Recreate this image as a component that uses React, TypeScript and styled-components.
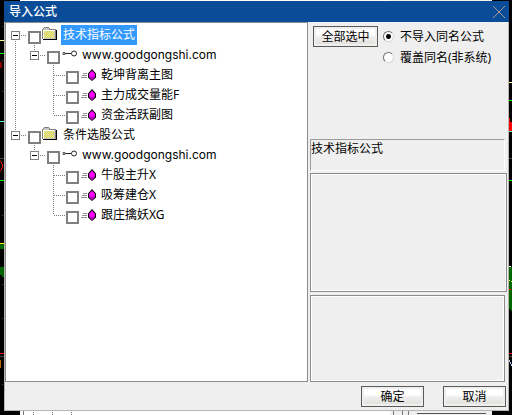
import React, { useState } from "react";
import styled, { createGlobalStyle } from "styled-components";

const Global = createGlobalStyle`
  * { box-sizing: border-box; }
  html, body, #root { height: 100%; }
  body {
    margin: 0;
    overflow: hidden;
    background: #000;
    color: #000;
    font: 12px/20px "Noto Sans", "Noto Sans CJK SC", sans-serif;
  }
`;

const Desktop = styled.div`
  position: relative;
  height: 100%;
  padding: 1px 3px 4px 4px;
`;

const Backdrop = styled.svg`
  position: absolute;
  top: 0;
`;
const LeftBackdrop = styled(Backdrop)`left: 0;`;
const RightBackdrop = styled(Backdrop)`right: 0;`;

const Behind = styled.div<{ $edge: "top" | "bottom" }>`
  position: absolute;
  left: 20px;
  right: 20px;
  height: 4px;
  ${(p) => p.$edge}: 0;
  background: linear-gradient(90deg, #fff 0 370px, #efefef 370px);
`;

const BehindArt = styled.svg`
  display: block;
`;

const Dialog = styled.main`
  position: relative;
  height: 100%;
  display: flex;
  flex-direction: column;
  background: #efefef;
  border: 1px solid #bab4ab;
  border-top: 0;
`;

const TitleBar = styled.header`
  flex: none;
  height: 21px;
  margin: 0 -1px;
  padding: 0 0 0 5px;
  display: flex;
  align-items: center;
  justify-content: space-between;
  background: #0b4c98;
  color: #fff;
`;

const Title = styled.h1`
  margin: 0;
  font-size: 12px;
  line-height: 20px;
  font-weight: 500;
`;

const CloseButton = styled.button`
  width: 20px;
  height: 20px;
  padding: 4px;
  border: 0;
  background: none;
`;

const Body = styled.div`
  flex: 1;
  min-height: 0;
  display: grid;
  grid-template-columns: 303fr 200fr;
`;

const Tree = styled.ul`
  margin: 0;
  padding: 2px 0 0 3px;
  list-style: none;
  background: #fff;
  border: 1px solid #8b8b8b;
`;

const Row = styled.li`
  height: 20px;
  display: flex;
  align-items: flex-start;
`;

const Glyph = styled.svg`
  flex: none;
  display: block;
`;

const Check = styled.input`
  appearance: none;
  flex: none;
  width: 13px;
  height: 13px;
  margin: 6px 0 0;
  border: 2px solid #808080;
  background: #fff;
  &:checked { background: #808080; background-clip: content-box; padding: 1px; }
`;

const RowLabel = styled.label`
  display: flex;
  white-space: nowrap;
`;

const RowText = styled.span<{ $selected?: boolean; $url?: boolean }>`
  height: 20px;
  padding: 0 2px;
  line-height: 20px;
  font-family: ${(p) => (p.$url ? 'Inter, "Noto Sans", sans-serif' : "inherit")};
  background: ${(p) => (p.$selected ? "#3399ff" : "transparent")};
  color: ${(p) => (p.$selected ? "#fff" : "#000")};
`;

const Side = styled.section`
  min-width: 0;
  display: flex;
  flex-direction: column;
  padding: 4px 1px 0 2px;
`;

const Options = styled.div`
  flex: none;
  height: 113px;
  display: flex;
  align-items: flex-start;
  gap: 5px;
  padding-left: 3px;
`;

const PushButton = styled.button`
  flex: none;
  width: 63px;
  height: 21px;
  padding: 0;
  border: 1px solid #5a5a5a;
  box-shadow: inset 0 0 0 2px #efefef;
  background: linear-gradient(#fff 0 40%, #eeedeb 55%, #e1dfdb);
  color: #000;
  font: inherit;
  line-height: 18px;
`;
const SelectAll = styled(PushButton)`width: 65px;`;

const Radios = styled.div`
  display: flex;
  flex-direction: column;
  white-space: nowrap;
`;

const RadioLabel = styled.label`
  height: 21px;
  display: flex;
  align-items: center;
  gap: 6px;
`;

const Radio = styled.input`
  appearance: none;
  width: 11px;
  height: 11px;
  margin: 0;
  border-radius: 50%;
  border: 1px solid;
  border-color: #707070 #d8d8d8 #d8d8d8 #707070;
  background: #fff;
  &:checked { background: radial-gradient(circle, #000 0 2px, #fff 3px); }
`;

const Caption = styled.div`
  flex: none;
  height: 32px;
  margin-right: 2px;
  border: 1px solid;
  border-color: #9c9c9c #fff #fff #9c9c9c;
  line-height: 18px;
`;

const Panel = styled.div<{ $wide?: boolean }>`
  flex: ${(p) => (p.$wide ? 119 : 87)} 0 0;
  margin: ${(p) => (p.$wide ? "2px 0 3px" : "0 2px 0 0")};
  border: 1px solid #8b8b8b;
  box-shadow: inset 0 0 0 1px #fff;
`;

const Footer = styled.footer`
  flex: none;
  height: 28px;
  display: flex;
  justify-content: flex-end;
  gap: 19px;
  padding: 4px 2px 0;
`;

const ditherRows = [6, 7, 8, 9, 10, 11, 12];

function Folder() {
  return (
    <Glyph width="20" height="20" shapeRendering="crispEdges">
      <path d="M1 14V4h1V3h1V2h5v1h1v1h6v10z" fill="#808080" />
      <path d="M3 3h5v1H3zM2 4h6v1h6v9H2z" fill="#c8c8c0" />
      {ditherRows.map((y) => (
        <path key={y} d={`M${3 + (y % 2)} ${y + 0.5}h10`} stroke="#f4f430" strokeDasharray="1 1" />
      ))}
      <path d="M2 5h12v1H3v8H2z" fill="#fff" />
      <path d="M15 5h1v10H2v-1h13z" fill="#000" />
    </Glyph>
  );
}

function Link() {
  return (
    <Glyph width="20" height="20" fill="none" stroke="#222">
      <path d="M5 8.500h6" />
      <path d="M3 7.500h2v2H3z" stroke="#555" />
      <circle cx="14" cy="8.500" r="2.500" />
    </Glyph>
  );
}

function Gem() {
  return (
    <Glyph width="20" height="20">
      <path d="M4 8.500h4M3 10.500h5M2 12.500h6" stroke="#909090" />
      <path d="M13 4l4 4.500v4L13 16l-4-3.500v-4z" fill="#000" />
      <path d="M13 5.500l3 3.500v3l-3 3-3-3V9z" fill="#f0f" />
      <path d="M10 10.500l3 3 3-3M13 13v2" fill="none" stroke="#900090" />
    </Glyph>
  );
}

type Item = { text: string; depth: 0 | 1 | 2; selected?: boolean; trunk?: boolean; first?: boolean; last?: boolean };

const items: Item[] = [
  { text: "技术指标公式", depth: 0, selected: true, trunk: true, first: true },
  { text: "www.goodgongshi.com", depth: 1, trunk: true },
  { text: "乾坤背离主图", depth: 2, trunk: true },
  { text: "主力成交量能F", depth: 2, trunk: true },
  { text: "资金活跃副图", depth: 2, trunk: true, last: true },
  { text: "条件选股公式", depth: 0 },
  { text: "www.goodgongshi.com", depth: 1 },
  { text: "牛股主升X", depth: 2 },
  { text: "吸筹建仓X", depth: 2 },
  { text: "跟庄擒妖XG", depth: 2, last: true },
];

function Connector({ item }: { item: Item }) {
  const { depth, trunk, first, last } = item;
  const left = depth * 19;
  const dots = { stroke: "#808080", strokeDasharray: "1 1" };
  return (
    <Glyph width={left + 19} height="20" shapeRendering="crispEdges">
      {trunk && <path d={first ? "M6.500 14v6" : "M6.500 0v20"} {...dots} />}
      {depth === 0 && !first && <path d="M6.500 0v6" {...dots} />}
      {depth === 1 && <path d="M25.500 0v6" {...dots} />}
      {depth === 2 ? (
        <path d={`M44.500 0v${last ? 10 : 20}M45 10.500h11`} {...dots} />
      ) : (
        <g>
          <path d={`M${left + 12} 10.500h6`} {...dots} />
          <rect x={left + 2.5} y="6.500" width="8" height="8" fill="#fff" stroke="#808080" />
          <path d={`M${left + 4} 10.500h5`} stroke="#000" />
        </g>
      )}
    </Glyph>
  );
}

const icons = [Folder, Link, Gem];

export default function App() {
  const [mode, setMode] = useState("skip");
  return (
    <>
      <Global />
      <Desktop>
        <LeftBackdrop width="5" height="415" shapeRendering="crispEdges">
          <path d="M0 40.500h5" stroke="#ff8" />
          <path d="M0 53.500h5M0 180.500h5" stroke="#0f0" />
          <path d="M0 121.500h5" stroke="#5fc" />
          <path d="M0 62h2v6H0z" fill="#800" />
          <path d="M0 161q5 5 0 10" stroke="#f00" fill="none" />
          <path d="M0 244h5v5H0zM0 267h4v10H2v-2H0z" fill="#060" />
          <path d="M0 243.500h5" stroke="#ff0" />
          <path d="M0 353.500h5" stroke="#f00" />
          <path d="M0 158.500h5M0 356.500h5" stroke="#444" />
          <path d="M0 360h1v8H0z" fill="#b60" />
          <path d="M2.500 26v1M2.500 60v1M2.500 91v1M2.500 215v1M2.500 284v1M2.500 318v1M2.500 384v1" stroke="#555" />
        </LeftBackdrop>
        <RightBackdrop width="3" height="415" shapeRendering="crispEdges">
          <path d="M0 82.500h3" stroke="#ff8" />
          <path d="M0 100.500h3M0 180.500h3" stroke="#0f0" />
          <path d="M0 118h1v4h2v9H0z" fill="#f00" />
          <path d="M0 131.500h3" stroke="#5fc" />
          <path d="M0 266.500h2" stroke="#fff" />
          <path d="M0 267h3v45l-3-3z" fill="#060" />
          <path d="M0 280.500h1M2 281.500h1" stroke="#ff0" />
          <path d="M0 289.500h2M0 353.500h3" stroke="#f00" />
          <path d="M0 158.500h3M0 356.500h3" stroke="#444" />
          <path d="M0 360l3 6" stroke="#acf" />
        </RightBackdrop>
        <Behind $edge="top" />
        <Behind $edge="bottom">
          <BehindArt width="472" height="4" shapeRendering="crispEdges">
            <path d="M3.500 0v4M373.500 0v4M382.500 0v4M388.500 0v4" stroke="#777" />
            <path d="M13.500 1v3M32.500 1v3M51.500 1v3" stroke="#777" strokeDasharray="1 1" />
            <path d="M397 2.500h69" stroke="#555" />
          </BehindArt>
        </Behind>
        <Dialog>
          <TitleBar>
            <Title>导入公式</Title>
            <CloseButton aria-label="关闭">
              <svg width="12" height="12" stroke="#a09c98" display="block">
                <path d="M0 0l12 12M12 0L0 12" />
              </svg>
            </CloseButton>
          </TitleBar>
          <Body>
            <Tree>
              {items.map((item, i) => {
                const Icon = icons[item.depth];
                return (
                  <Row key={i}>
                    <Connector item={item} />
                    <Check type="checkbox" id={`item-${i}`} />
                    <RowLabel htmlFor={`item-${i}`}>
                      <Icon />
                      <RowText $selected={item.selected} $url={item.depth === 1}>{item.text}</RowText>
                    </RowLabel>
                  </Row>
                );
              })}
            </Tree>
            <Side>
              <Options>
                <SelectAll>全部选中</SelectAll>
                <Radios>
                  <RadioLabel>
                    <Radio type="radio" name="mode" checked={mode === "skip"} onChange={() => setMode("skip")} />
                    不导入同名公式
                  </RadioLabel>
                  <RadioLabel>
                    <Radio type="radio" name="mode" checked={mode === "over"} onChange={() => setMode("over")} />
                    覆盖同名(非系统)
                  </RadioLabel>
                </Radios>
              </Options>
              <Caption>技术指标公式</Caption>
              <Panel $wide />
              <Panel />
            </Side>
          </Body>
          <Footer>
            <PushButton>确定</PushButton>
            <PushButton>取消</PushButton>
          </Footer>
        </Dialog>
      </Desktop>
    </>
  );
}
